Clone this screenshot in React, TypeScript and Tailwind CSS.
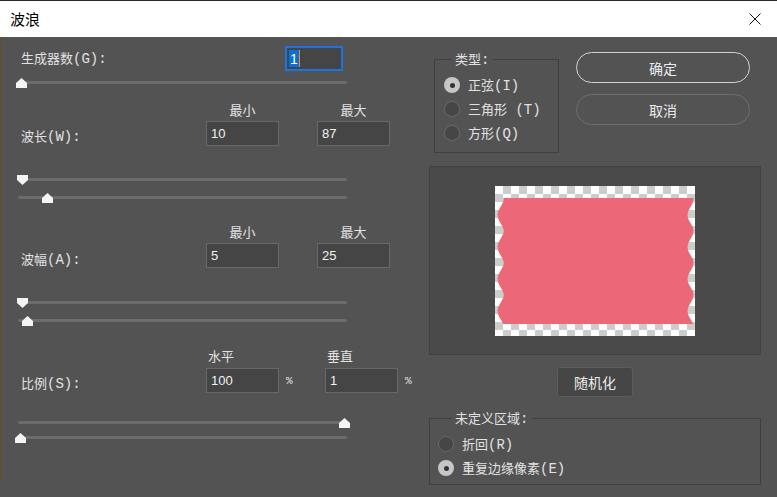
import React from "react";

type Dir = "up" | "down";

const Thumb: React.FC<{ dir: Dir; left: number }> = ({ dir, left }) => (
  <svg
    width="11"
    height="10"
    viewBox="0 0 11 10"
    className="absolute top-px"
    style={{ left }}
  >
    <polygon
      points={dir === "up" ? "0,10 0,5 5.5,0 11,5 11,10" : "0,0 11,0 11,5 5.5,10 0,5"}
      fill="#f4f4f4"
    />
  </svg>
);

const Slider: React.FC<{ dir: Dir; left: number; className?: string }> = ({
  dir,
  left,
  className = "",
}) => (
  <div className={`relative ml-[17px] h-[10px] w-[329px] ${className}`}>
    <div className="mt-[4px] h-[3px] rounded-full bg-[#6c6c6c]" />
    <Thumb dir={dir} left={left} />
  </div>
);

// latin part of a label, set in a fixed-width face like the original dialog
const Lat: React.FC<{ children: React.ReactNode }> = ({ children }) => (
  <span className="font-['Liberation_Mono',monospace] text-[14px]">{children}</span>
);

const NumBox: React.FC<{ value: string }> = ({ value }) => (
  <div className="flex h-[25px] w-[73px] shrink-0 items-center border border-[#686868] bg-[#454545] pl-[4px] font-['Liberation_Sans',sans-serif] text-[13px] text-[#f2f2f2]">
    {value}
  </div>
);

const Radio: React.FC<{ on?: boolean; cjk: string; latin: string }> = ({ on, cjk, latin }) => (
  <div className="flex h-[24px] items-center">
    {on ? (
      <span className="flex size-[16px] items-center justify-center rounded-full bg-[#c6c6c6]">
        <span className="size-[5px] rounded-full bg-[#333333]" />
      </span>
    ) : (
      <span className="size-[16px] rounded-full border border-[#686868] bg-[#464646]" />
    )}
    <span className="ml-[8px] whitespace-pre">
      {cjk}
      <Lat>{latin}</Lat>
    </span>
  </div>
);

const wavePath = (() => {
  const l = (y: number) => 5.5 + 3 * Math.cos((2 * Math.PI * (y - 13)) / 32);
  const pts: string[] = [];
  for (let y = 12; y <= 138; y += 2) pts.push(`${(l(y) + 190).toFixed(1)},${y}`);
  for (let y = 138; y >= 12; y -= 2) pts.push(`${l(y).toFixed(1)},${y}`);
  return "M" + pts.join(" L") + "Z";
})();

export default function App() {
  return (
    <div className="h-[497px] w-[777px] overflow-hidden bg-[#535353] font-['Noto_Sans_CJK_SC','Noto_Sans',sans-serif] text-[13px] leading-[16px] text-[#e2e2e2]">
      {/* title bar */}
      <div className="flex h-[37px] items-center justify-between border-t border-[#2b2b2b] bg-white pl-[10px] pr-[16px]">
        <span className="text-[15px] leading-[18px] text-black">波浪</span>
        <svg width="12" height="12" viewBox="0 0 12 12">
          <path d="M0.5 0.5 L11.5 11.5 M11.5 0.5 L0.5 11.5" stroke="#111" strokeWidth="1" />
        </svg>
      </div>

      <div className="flex border-l border-[#6b4a2c]">
        {/* left column */}
        <div className="flex w-[428px] flex-col">
          <div className="mt-[9px] flex h-[25px] items-center">
            <span className="ml-[20px] w-[264px]">
              生成器数<Lat>(G):</Lat>
            </span>
            <div className="flex h-[25px] w-[58px] items-center border-2 border-[#1d72e6] bg-[#454545] pl-[2px] font-['Liberation_Sans',sans-serif] text-[14px]">
              <span className="flex h-[17px] items-center bg-[#0a6fd6] px-px text-white">1</span>
              <span className="h-[17px] w-px bg-[#f08a24]" />
            </div>
          </div>
          <Slider dir="up" left={-2.5} className="mt-[6px]" />

          <div className="mt-[15px] flex h-[16px]">
            <span className="ml-[205px] w-[73px] text-center">最小</span>
            <span className="ml-[38px] w-[73px] text-center">最大</span>
          </div>
          <div className="mt-[3px] flex h-[25px] items-center">
            <span className="ml-[20px] w-[185px] pt-[6px]">
              波长<Lat>(W):</Lat>
            </span>
            <NumBox value="10" />
            <div className="w-[38px]" />
            <NumBox value="87" />
          </div>
          <Slider dir="down" left={-1} className="mt-[28px]" />
          <Slider dir="up" left={24} className="mt-[8px]" />

          <div className="mt-[22px] flex h-[16px]">
            <span className="ml-[205px] w-[73px] text-center">最小</span>
            <span className="ml-[38px] w-[73px] text-center">最大</span>
          </div>
          <div className="mt-[3px] flex h-[25px] items-center">
            <span className="ml-[20px] w-[185px] pt-[8px]">
              波幅<Lat>(A):</Lat>
            </span>
            <NumBox value="5" />
            <div className="w-[38px]" />
            <NumBox value="25" />
          </div>
          <Slider dir="down" left={-1} className="mt-[29px]" />
          <Slider dir="up" left={3.5} className="mt-[8px]" />

          <div className="mt-[23px] flex h-[16px]">
            <span className="ml-[207px] w-[119px]">水平</span>
            <span>垂直</span>
          </div>
          <div className="mt-[4px] flex h-[25px] items-center">
            <span className="ml-[20px] w-[185px] pt-[6px]">
              比例<Lat>(S):</Lat>
            </span>
            <NumBox value="100" />
            <span className="w-[46px] pl-[7px] font-['Liberation_Mono',monospace] text-[11px]">%</span>
            <NumBox value="1" />
            <span className="pl-[7px] font-['Liberation_Mono',monospace] text-[11px]">%</span>
          </div>
          <Slider dir="up" left={320.5} className="mt-[24px]" />
          <Slider dir="up" left={-3} className="mt-[5px]" />
        </div>

        {/* right column */}
        <div className="flex w-[332px] flex-col">
          <div className="mt-[14px] flex items-start">
            <fieldset className="ml-[5px] h-[102px] w-[125px] border border-[#3f3f3f] pl-[9px]">
              <legend className="ml-[7px] px-[4px]">
                类型<Lat>:</Lat>
              </legend>
              <div className="mt-[5px]">
                <Radio on cjk="正弦" latin="(I)" />
                <Radio cjk="三角形" latin=" (T)" />
                <Radio cjk="方形" latin="(Q)" />
              </div>
            </fieldset>
            <div className="ml-[17px] mt-px flex flex-col gap-[11px]">
              <button className="h-[31px] w-[174px] rounded-full border-[1.5px] border-[#d2d2d2] text-[14px] leading-[16px] text-[#ececec]">
                确定
              </button>
              <button className="h-[31px] w-[174px] rounded-full border-[1.5px] border-[#6e6e6e] text-[14px] leading-[16px] text-[#ececec]">
                取消
              </button>
            </div>
          </div>

          <div className="mt-[13px] flex h-[189px] items-center justify-center border border-[#424242] bg-[#4a4a4a]">
            <svg width="200" height="150" viewBox="0 0 200 150">
              <defs>
                <pattern id="chk" width="16" height="16" patternUnits="userSpaceOnUse">
                  <rect width="16" height="16" fill="#ffffff" />
                  <rect x="8" width="8" height="8" fill="#cccccc" />
                  <rect y="8" width="8" height="8" fill="#cccccc" />
                </pattern>
              </defs>
              <rect width="200" height="150" fill="url(#chk)" />
              <path d={wavePath} fill="#ec6879" />
            </svg>
          </div>

          <button className="ml-[128px] mt-[12px] h-[30px] w-[76px] rounded-[3px] border border-[#5c5c5c] bg-[#464646] text-[14px] text-[#ececec]">
            随机化
          </button>

          <fieldset className="mt-[13px] h-[75px] border border-[#3f3f3f] pl-[8px]">
            <legend className="ml-[13px] px-[4px]">
              未定义区域<Lat>:</Lat>
            </legend>
            <div className="mt-[5px]">
              <Radio cjk="折回" latin="(R)" />
              <Radio on cjk="重复边缘像素" latin="(E)" />
            </div>
          </fieldset>
        </div>
      </div>
    </div>
  );
}
